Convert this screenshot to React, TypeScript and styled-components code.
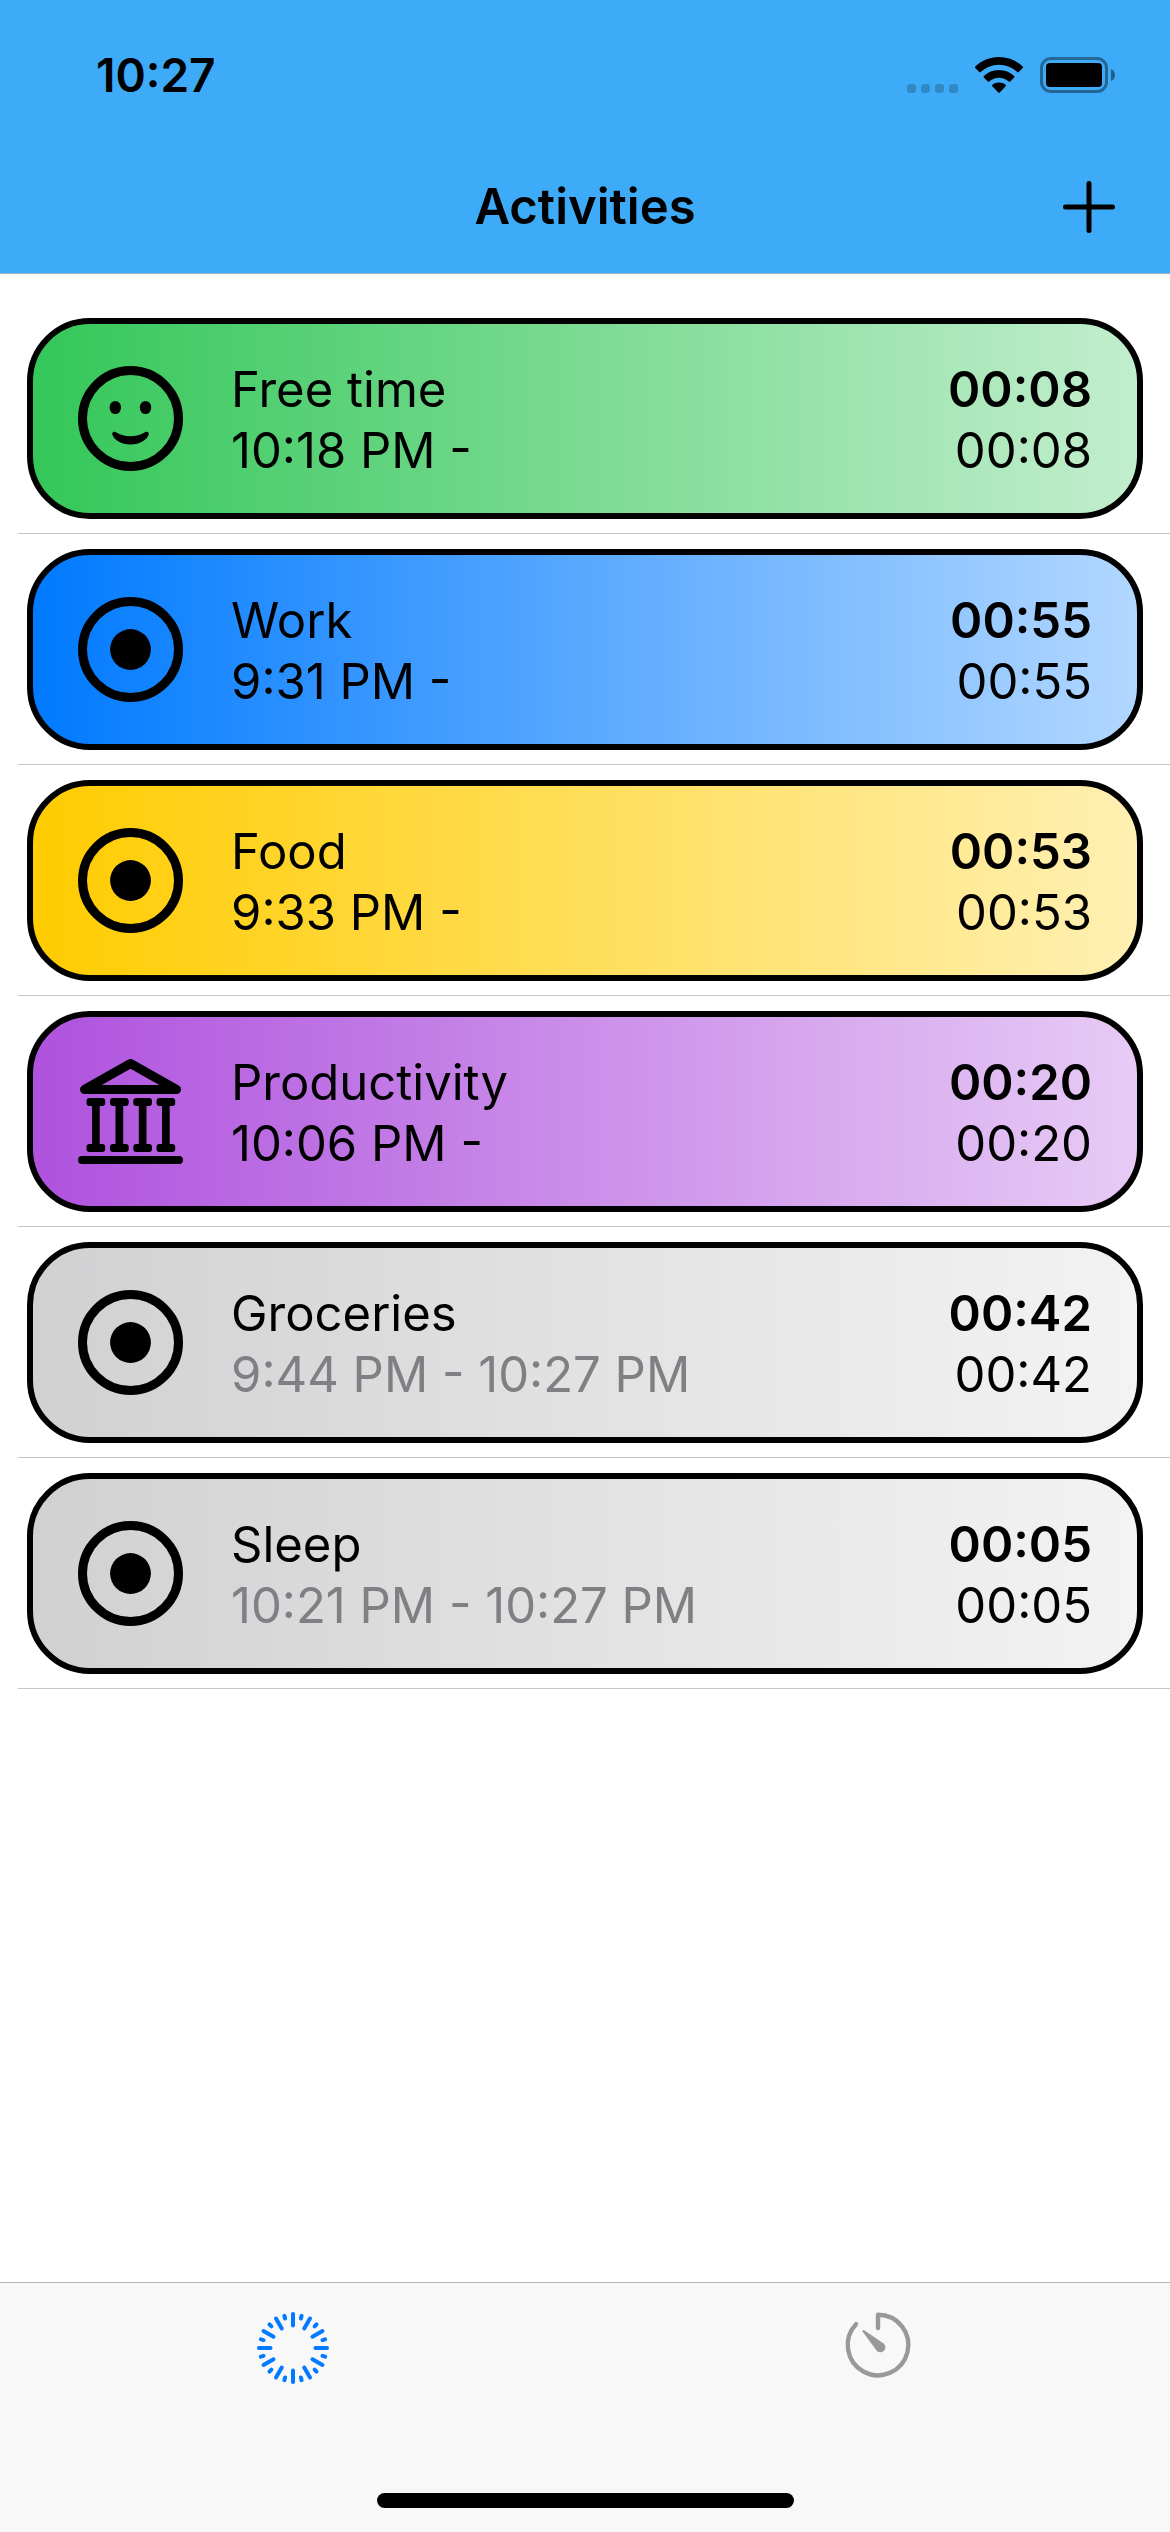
import React, { useState } from "react";
import styled, { createGlobalStyle } from "styled-components";

const GlobalStyle = createGlobalStyle`
  *, *::before, *::after { box-sizing: border-box; }
  body {
    margin: 0;
    background: #fff;
    color: #000;
    font-family: Inter, "Liberation Sans", Arial, sans-serif;
  }
  button {
    font: inherit;
    color: inherit;
    background: none;
    border: 0;
    padding: 0;
    cursor: pointer;
  }
  svg { display: block; }
`;

const Screen = styled.div`
  display: flex;
  flex-direction: column;
  min-height: 100vh;
`;

const Header = styled.header`
  background: #3dabf7;
  border-bottom: 1px solid #a3b1bc;
`;

const StatusBar = styled.div`
  display: flex;
  justify-content: space-between;
  align-items: center;
  height: 141px;
  padding: 8px 54px 0 96px;
`;

const Clock = styled.time`
  font-size: 46px;
  line-height: 54px;
  font-weight: 600;
`;

const StatusIcons = styled.div`
  display: flex;
  align-items: flex-end;
  gap: 17px;
`;

const NavBar = styled.div`
  display: grid;
  grid-template-columns: 1fr auto 1fr;
  align-items: center;
  height: 132px;
  padding: 0 48px;
`;

const Title = styled.h1`
  grid-column: 2;
  margin: 0;
  font-size: 49px;
  line-height: 60px;
  font-weight: 600;
`;

const AddButton = styled.button`
  justify-self: end;
  padding: 7px;
`;

const ActivityList = styled.ul`
  flex: 1;
  margin: 0;
  padding: 29px 0 0 18px;
  list-style: none;
`;

const ActivityRow = styled.li`
  padding: 15px 27px 14px 9px;
  border-bottom: 1px solid #c6c6c8;
`;

const Card = styled.article<{ $from: string; $to: string }>`
  display: flex;
  align-items: center;
  gap: 48px;
  height: 201px;
  padding: 0 45px;
  border: 6px solid #000;
  border-radius: 63px;
  background: linear-gradient(to right, ${(p) => p.$from}, ${(p) => p.$to});
  font-size: 49px;
  line-height: 61px;
`;

const Details = styled.div`
  flex: 1;
  padding-top: 2px;
`;

const Name = styled.h2`
  margin: 0;
  font: inherit;
`;

const Period = styled.p<{ $ended: boolean }>`
  margin: 0;
  color: ${(p) => (p.$ended ? "#808084" : "#000")};
`;

const Totals = styled.div`
  padding-top: 2px;
  text-align: right;
`;

const Total = styled.div<{ $strong?: boolean }>`
  font-weight: ${(p) => (p.$strong ? 600 : 400)};
`;

const TabBar = styled.nav`
  display: flex;
  flex-direction: column;
  align-items: center;
  padding-bottom: 24px;
  background: #f8f8f8;
  border-top: 1px solid #b2b2b2;
`;

const Tabs = styled.div`
  display: flex;
  width: 100%;
  height: 210px;
`;

const Tab = styled.button<{ $active: boolean }>`
  display: flex;
  flex: 1;
  justify-content: center;
  align-items: flex-start;
  padding-top: 25px;
  color: ${(p) => (p.$active ? "#007aff" : "#999")};
`;

const HomeIndicator = styled.div`
  width: 417px;
  max-width: 60%;
  height: 15px;
  border-radius: 8px;
  background: #000;
`;

const SignalIcon = () => (
  <svg width="51" height="9" viewBox="0 0 51 9" opacity="0.2" aria-hidden="true">
    {[0, 14, 28, 42].map((x) => (
      <rect key={x} x={x} width="9" height="9" rx="3" />
    ))}
  </svg>
);

const WifiIcon = () => (
  <svg width="48" height="36" viewBox="0 0 48 36" aria-hidden="true">
    <path d="M24 0C33.2 0 41.600 3.600 47.700 9.600c.4.4.4 1 0 1.400l-4 4.100c-.4.4-1 .4-1.400 0C37.500 10.500 31 7.700 24 7.700S10.500 10.500 5.700 15.100c-.4.4-1 .4-1.400 0l-4-4.100c-.4-.4-.4-1 0-1.400C6.400 3.600 14.800 0 24 0Z" />
    <path d="M24 13c5.800 0 11.200 2.200 15.200 6 .4.4.4 1 0 1.400l-4 4c-.4.4-1 .4-1.400.1C31.100 22.100 27.700 20.700 24 20.700s-7.100 1.400-9.800 3.800c-.4.3-1 .3-1.400-.1l-4-4c-.4-.4-.4-1 0-1.400 4-3.800 9.400-6 15.200-6Z" />
    <path d="M24 25.500c2.500 0 4.800.8 6.600 2.300.5.400.5 1 .1 1.400l-6 6.300c-.4.4-1 .4-1.400 0l-6-6.300c-.4-.4-.4-1 .1-1.400 1.800-1.500 4.100-2.300 6.600-2.300Z" />
  </svg>
);

const BatteryIcon = () => (
  <svg width="76" height="36" viewBox="0 0 76 36" aria-hidden="true">
    <rect x="1.500" y="1.500" width="65" height="33" rx="9.500" fill="none" stroke="#000" strokeWidth="3" opacity="0.4" />
    <rect x="6" y="6" width="56" height="24" rx="4" />
    <path d="M71 12c2.500 1 4 3.300 4 6s-1.500 5-4 6Z" opacity="0.45" />
  </svg>
);

const PlusIcon = () => (
  <svg width="52" height="52" viewBox="0 0 52 52" fill="none" stroke="currentColor" strokeWidth="5" strokeLinecap="round" aria-hidden="true">
    <path d="M26 2.500v47M2.500 26h47" />
  </svg>
);

const SmileIcon = () => (
  <svg width="105" height="105" viewBox="0 0 105 105" aria-hidden="true">
    <circle cx="52.500" cy="52.500" r="48" fill="none" stroke="#000" strokeWidth="9" />
    <ellipse cx="37.300" cy="41.500" rx="5.700" ry="6.600" />
    <ellipse cx="67.500" cy="41.500" rx="5.700" ry="6.600" />
    <path d="M34.300 68.500c-.5-2 1.300-3.500 3.700-2.200 4.300 2.500 9 3.900 14.500 3.900s10.200-1.400 14.500-3.900c2.400-1.300 4.200.2 3.700 2.200-1.800 5.600-8.800 9.900-18.200 9.900s-16.400-4.300-18.200-9.900Z" />
  </svg>
);

const TargetIcon = () => (
  <svg width="105" height="105" viewBox="0 0 105 105" aria-hidden="true">
    <circle cx="52.500" cy="52.500" r="48" fill="none" stroke="#000" strokeWidth="9" />
    <circle cx="52.500" cy="52.500" r="20.400" />
  </svg>
);

const BankIcon = () => (
  <svg width="105" height="105" viewBox="0 0 105 105" aria-hidden="true">
    <path d="M52.500 4.500 6.500 30.500h92Z" fill="none" stroke="#000" strokeWidth="9" strokeLinejoin="round" />
    {[8.500, 32, 55.300, 78.500].map((x) => (
      <g key={x}>
        <rect x={x} y="39" width="18.700" height="8" rx="3" />
        <rect x={x + 5.500} y="42" width="7.700" height="48" />
        <rect x={x} y="85" width="18.700" height="8" rx="3" />
      </g>
    ))}
    <rect y="97" width="105" height="8" rx="4" />
  </svg>
);

const RaysIcon = () => (
  <svg width="80" height="80" viewBox="-40 -40 80 80" stroke="currentColor" strokeWidth="4" strokeLinecap="round" aria-hidden="true">
    {Array.from({ length: 24 }, (_, i) => (
      <line key={i} y1={i % 2 ? -33.300 : -34} y2={i % 2 ? -30.500 : -22.500} transform={`rotate(${i * 15})`} />
    ))}
  </svg>
);

const TimerIcon = () => (
  <svg width="80" height="80" viewBox="-40 -37 80 80" aria-hidden="true">
    <path d="M0-17V-30.300A30.300 30.300 0 1 1-22-20.800" fill="none" stroke="currentColor" strokeWidth="4.400" strokeLinecap="round" strokeLinejoin="round" />
    <path d="M-15.300-13.200c-.8-1 .4-2.300 1.500-1.600L4.200-2.500A5.100 5.100 0 1 1-2.400 4.300Z" fill="currentColor" />
  </svg>
);

const icons = { smile: SmileIcon, target: TargetIcon, bank: BankIcon };

type Activity = {
  name: string;
  period: string;
  total: string;
  icon: keyof typeof icons;
  from: string;
  to: string;
  ended?: boolean;
};

const activities: Activity[] = [
  { name: "Free time", period: "10:18 PM -", total: "00:08", icon: "smile", from: "#34c759", to: "#c2eecd" },
  { name: "Work", period: "9:31 PM -", total: "00:55", icon: "target", from: "#007aff", to: "#b2d7ff" },
  { name: "Food", period: "9:33 PM -", total: "00:53", icon: "target", from: "#ffcc00", to: "#fff0b3" },
  { name: "Productivity", period: "10:06 PM -", total: "00:20", icon: "bank", from: "#af52de", to: "#e7cbf5" },
  { name: "Groceries", period: "9:44 PM - 10:27 PM", total: "00:42", icon: "target", from: "#d1d1d3", to: "#f3f3f3", ended: true },
  { name: "Sleep", period: "10:21 PM - 10:27 PM", total: "00:05", icon: "target", from: "#d1d1d3", to: "#f3f3f3", ended: true },
];

export default function App() {
  const [tab, setTab] = useState("activities");

  return (
    <Screen>
      <GlobalStyle />
      <Header>
        <StatusBar>
          <Clock>10:27</Clock>
          <StatusIcons>
            <SignalIcon />
            <WifiIcon />
            <BatteryIcon />
          </StatusIcons>
        </StatusBar>
        <NavBar>
          <Title>Activities</Title>
          <AddButton type="button" aria-label="Add activity">
            <PlusIcon />
          </AddButton>
        </NavBar>
      </Header>
      <ActivityList>
        {activities.map((a) => {
          const Icon = icons[a.icon];
          return (
            <ActivityRow key={a.name}>
              <Card $from={a.from} $to={a.to}>
                <Icon />
                <Details>
                  <Name>{a.name}</Name>
                  <Period $ended={!!a.ended}>{a.period}</Period>
                </Details>
                <Totals>
                  <Total $strong>{a.total}</Total>
                  <Total>{a.total}</Total>
                </Totals>
              </Card>
            </ActivityRow>
          );
        })}
      </ActivityList>
      <TabBar>
        <Tabs>
          <Tab type="button" aria-label="Activities" $active={tab === "activities"} onClick={() => setTab("activities")}>
            <RaysIcon />
          </Tab>
          <Tab type="button" aria-label="Timer" $active={tab === "timer"} onClick={() => setTab("timer")}>
            <TimerIcon />
          </Tab>
        </Tabs>
        <HomeIndicator />
      </TabBar>
    </Screen>
  );
}
